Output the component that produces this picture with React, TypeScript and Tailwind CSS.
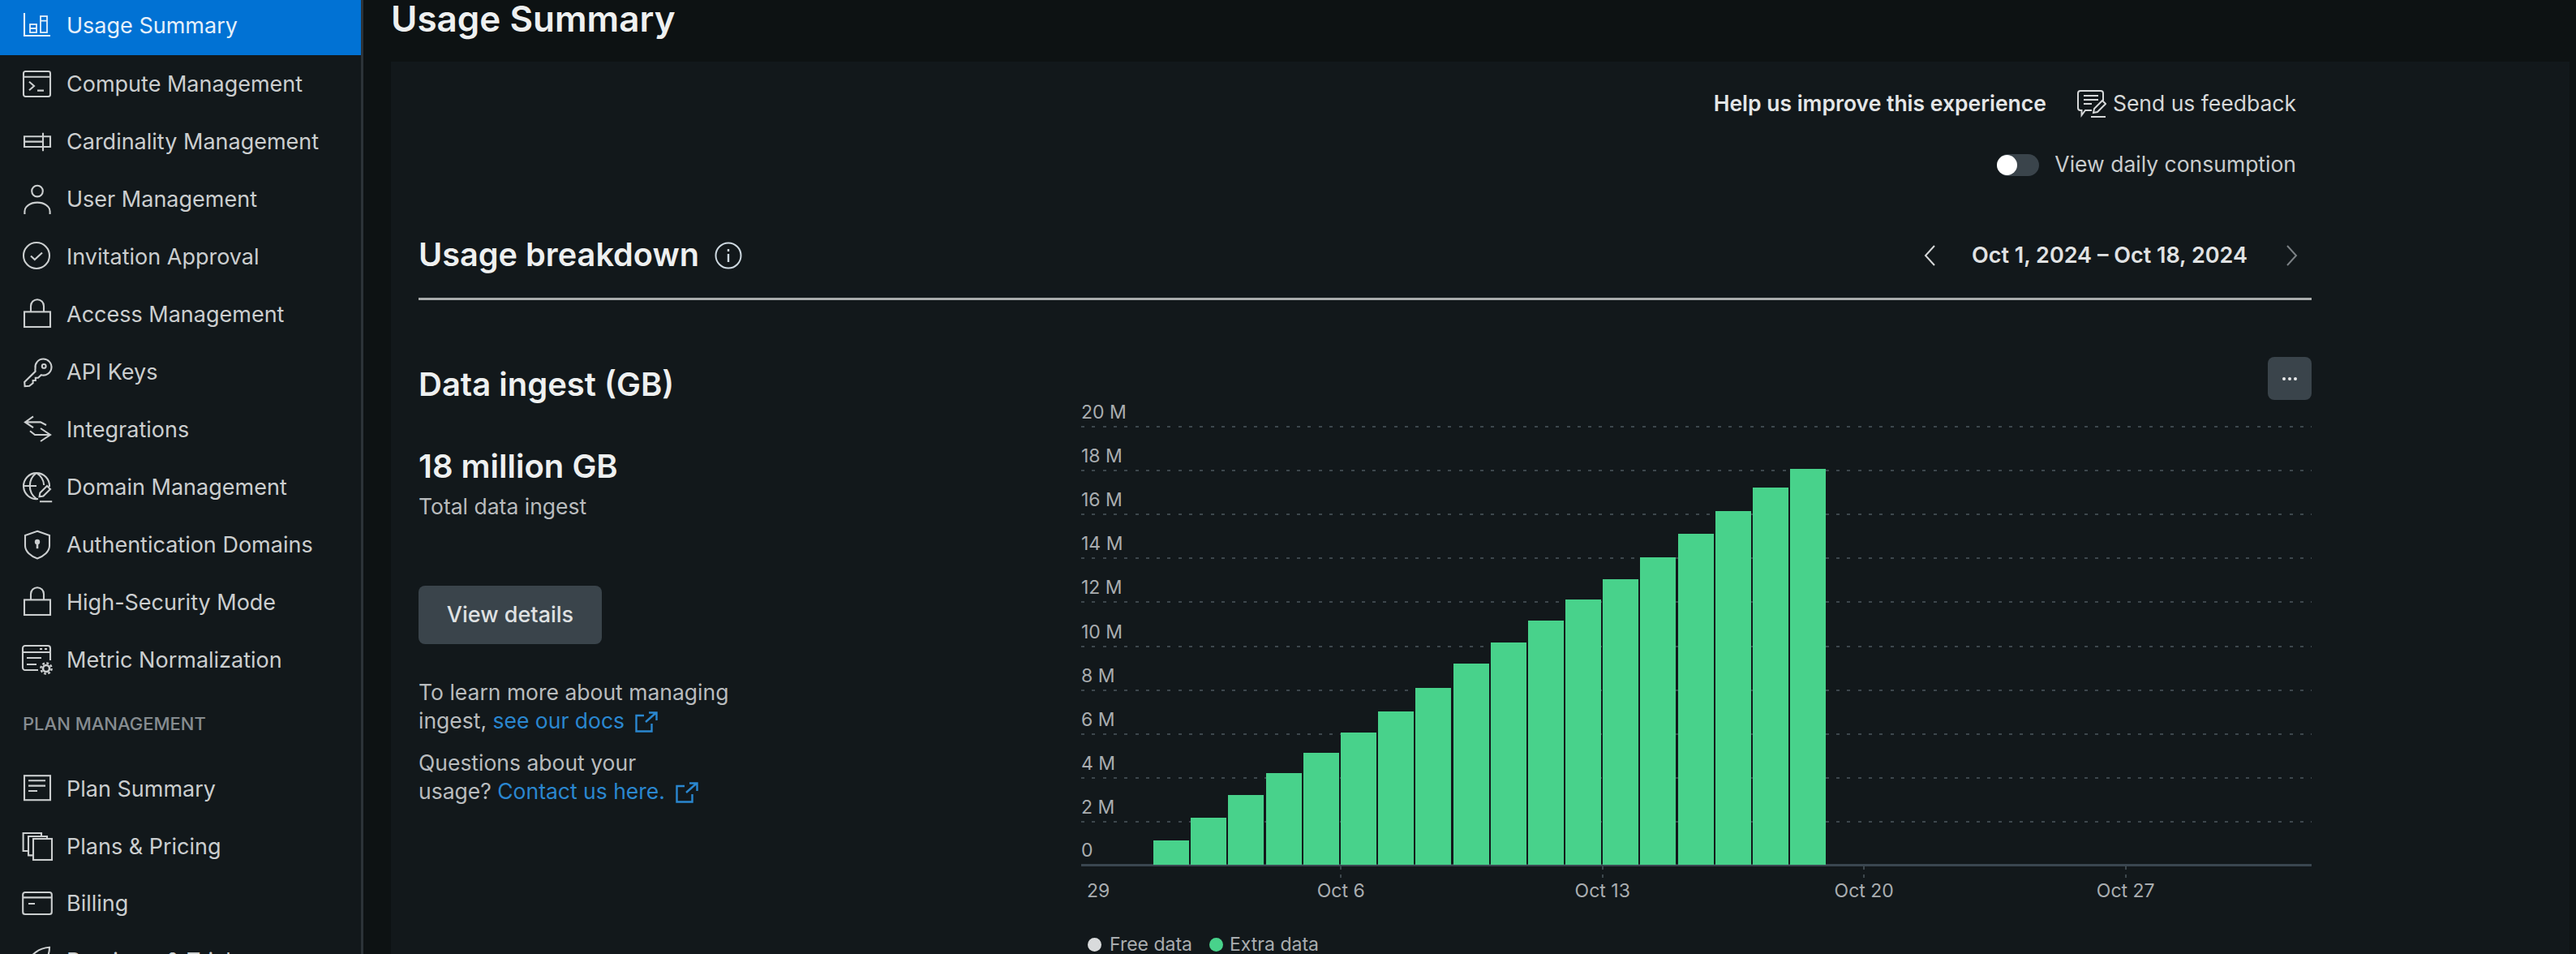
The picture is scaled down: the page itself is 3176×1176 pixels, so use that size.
import { ReactNode } from 'react'

const ic = { fill: 'none', stroke: 'currentColor', strokeWidth: 1.05 }

function Glyph({ children }: { children: ReactNode }) {
  return (
    <svg viewBox="0 0 18 18" className="w-9 h-9 shrink-0 overflow-visible" {...ic}>
      {children}
    </svg>
  )
}

const lock = (
  <Glyph>
    <rect x="1.5" y="7.2" width="16" height="9.3" />
    <path d="M5.5 7.2V3.6a4 4 0 0 1 8 0v3.6" />
  </Glyph>
)

const adminItems: { label: string; icon: ReactNode }[] = [
  {
    label: 'Compute Management',
    icon: (
      <Glyph>
        <rect x="1" y="1" width="16.5" height="15.5" rx="1.2" />
        <path d="M1 4.4h16.5M4.5 7.4l3 2.6-3 2.6M9.5 12.8h4" />
      </Glyph>
    ),
  },
  {
    label: 'Cardinality Management',
    icon: (
      <Glyph>
        <path d="M13 5.6H1.5V12H13M1.5 8.8H13M13 3.4v11.2M13 5.6h4.5V12H13" />
      </Glyph>
    ),
  },
  {
    label: 'User Management',
    icon: (
      <Glyph>
        <circle cx="9.5" cy="3.8" r="3.4" />
        <path d="M1.7 18v-1.6c0-3.2 3.4-5.6 7.8-5.6s7.8 2.4 7.8 5.6V18" />
      </Glyph>
    ),
  },
  {
    label: 'Invitation Approval',
    icon: (
      <Glyph>
        <circle cx="9" cy="8" r="8" />
        <path d="M5.5 8.2l2.4 2.3 4.6-4.3" />
      </Glyph>
    ),
  },
  { label: 'Access Management', icon: lock },
  {
    label: 'API Keys',
    icon: (
      <Glyph>
        <path d="M8.3 6.6a5 5 0 1 1 3.6 4L10 12.4H8.4V14H6.8v1.6L4.6 17.4l-2.8.2-.2-2.6 6.7-6.6a5 5 0 0 1 0-2z" />
        <circle cx="13.6" cy="5.2" r="1.2" />
      </Glyph>
    ),
  },
  {
    label: 'Integrations',
    icon: (
      <Glyph>
        <path d="M7 .7L2 4.2l5 3.4M2 4.2h9.5L15 6M11.5 8l6 4-6 4M17.5 12H8L5 9.6" />
      </Glyph>
    ),
  },
  {
    label: 'Domain Management',
    icon: (
      <Glyph>
        <path d="M10 16a8 8 0 1 1 7-7.5M1 8h8M9 0c-5.5 4-5.5 12 0 16M9 0c3 2 4.5 5 4.6 7.5" />
        <path d="M10.8 14.6l.4-2.4 4.3-4.2 2 2-4.3 4.3zM11 17.6h7.6" />
      </Glyph>
    ),
  },
  {
    label: 'Authentication Domains',
    icon: (
      <Glyph>
        <path d="M9.5.4L17 3v6.4c0 3.5-3.5 6.5-7.5 7.8C5.5 15.9 2 12.9 2 9.4V3z" />
        <circle cx="9.5" cy="7" r="1.6" fill="currentColor" stroke="none" />
        <path d="M9.5 7.5v3.6" strokeWidth="1.3" />
      </Glyph>
    ),
  },
  { label: 'High-Security Mode', icon: lock },
  {
    label: 'Metric Normalization',
    icon: (
      <Glyph>
        <path d="M10 15H2a1.5 1.5 0 0 1-1.5-1.5V1.5A1.5 1.5 0 0 1 2 0h14a1.5 1.5 0 0 1 1.5 1.5V9" />
        <path d="M.5 4h17M3 7.5h9M3 11.5h6M11 2h1.5M14 2h1.5" strokeWidth="0.9" />
        <circle cx="15" cy="14" r="2" strokeWidth="1.3" />
        <circle cx="15" cy="14" r="3.3" strokeWidth="1.2" strokeDasharray="1.4 1.2" />
      </Glyph>
    ),
  },
]

const planItems: { label: string; icon: ReactNode }[] = [
  {
    label: 'Plan Summary',
    icon: (
      <Glyph>
        <rect x="1.5" y="0.6" width="16" height="15" />
        <path d="M4 3.6h10.5M4 6.8h10.5M4 10h5.5" />
      </Glyph>
    ),
  },
  {
    label: 'Plans & Pricing',
    icon: (
      <Glyph>
        <rect x="7" y="4" width="11.5" height="13" />
        <path d="M7 14.2H4V2.5h11.5V4M4 11.5H.8V.5H12v2" />
      </Glyph>
    ),
  },
  {
    label: 'Billing',
    icon: (
      <Glyph>
        <rect x="0.6" y="2" width="17.8" height="13.5" rx="1.4" />
        <path d="M.6 5.2h17.8M4 9h4" />
      </Glyph>
    ),
  },
  {
    label: 'Previews & Trials',
    icon: (
      <Glyph>
        <path d="M2 9l6.5-5.6C11 1.5 14 .6 17 .4c0 3-.8 6-3 8.4L8.6 15z" />
      </Glyph>
    ),
  },
]

function NavRow({ label, icon, height = 'h-[71px]' }: { label: string; icon: ReactNode; height?: string }) {
  return (
    <div className={`${height} shrink-0 flex items-center pl-[27px] gap-[19px] text-[#cbcecf]`}>
      {icon}
      <span>{label}</span>
    </div>
  )
}

function Sidebar() {
  return (
    <aside className="w-[448px] shrink-0 h-full overflow-hidden bg-[#12181b] border-r-[3px] border-[#2c3338] text-[27px] leading-[36px]">
      <div className="h-[68px] flex items-center pb-1 pl-[27px] gap-[19px] bg-[#0172d4] text-[#e6f0fa]">
        <Glyph>
          <path d="M1.5 1v14h16" />
          <rect x="5" y="8" width="4" height="5" strokeWidth="0.9" />
          <rect x="11.5" y="3" width="4" height="10" strokeWidth="0.9" />
          <path d="M11.5 5.8h4M5 10.5h4" strokeWidth="0.9" />
        </Glyph>
        <span>Usage Summary</span>
      </div>
      {adminItems.map((item) => (
        <NavRow key={item.label} {...item} />
      ))}
      <div className="h-[89px] flex items-center pb-[4px] pl-[28px] text-[22px] font-medium text-[#868c90]">
        PLAN MANAGEMENT
      </div>
      {planItems.map((item) => (
        <NavRow key={item.label} height="h-[70.5px]" {...item} />
      ))}
    </aside>
  )
}

function ExternalLink() {
  return (
    <svg viewBox="0 0 28 26" className="inline-block w-[28px] h-[26px] ml-[13px] align-[-5px]" fill="none" stroke="currentColor" strokeWidth="2.4">
      <path d="M11 5H1.5v19.5h19V15M13 13L26 1.5M17 1.5h9.5V11" />
    </svg>
  )
}

// y position of each bar's top edge, left to right
const barTops = [1036, 1008, 980, 953, 928, 903, 877, 848, 818, 792, 765, 739, 714, 687, 658, 630, 601, 578]
const axisY = 1066

const yLabels = ['20 M', '18 M', '16 M', '14 M', '12 M', '10 M', '8 M', '6 M', '4 M', '2 M', '0']

function Chart() {
  return (
    <div className="relative flex-1 min-w-0 pt-[33px]">
      <button className="absolute right-0 top-0 w-[54px] h-[53px] rounded-lg bg-[#3a444b] flex items-center justify-center gap-[3px]">
        <span className="w-[4px] h-[4px] rounded-full bg-[#e8eaeb]" />
        <span className="w-[4px] h-[4px] rounded-full bg-[#e8eaeb]" />
        <span className="w-[4px] h-[4px] rounded-full bg-[#e8eaeb]" />
      </button>

      <div className="relative text-[23px] leading-[30px] text-[#a9adb0]">
        {yLabels.map((label) => (
          <div key={label} className="h-[54.1px] flex flex-col justify-end">
            <div className="pb-[2px]">{label}</div>
            {label === '0' ? (
              <div className="h-[3px] bg-[#3a4650]" />
            ) : (
              <div className="h-[2px] bg-[repeating-linear-gradient(90deg,#3d474d_0_4px,transparent_4px_13.3px)]" />
            )}
          </div>
        ))}

        <div className="absolute left-[89px] bottom-[2px] flex items-end gap-[2.2px]">
          {barTops.map((top) => (
            <div key={top} className="w-[44px] bg-[#48d28b]" style={{ height: axisY - top }} />
          ))}
        </div>
      </div>

      <div className="flex text-[23px] leading-[30px] text-[#a9adb0]">
        <div className="w-[159px] pl-[7px] pt-[15px]">29</div>
        {['Oct 6', 'Oct 13', 'Oct 20', 'Oct 27'].map((label) => (
          <div key={label} className="w-[322.5px] flex flex-col items-center">
            <div className="w-[2px] h-[15px] bg-[linear-gradient(#3d474d_0_4px,transparent_4px_10px,#3d474d_10px_14px,transparent_14px)]" />
            <div>{label}</div>
          </div>
        ))}
      </div>

      <div className="flex items-center mt-[38px] pl-[8px] h-[26px] text-[23px] leading-[26px] text-[#a9adb0]">
        <span className="w-[17px] h-[17px] rounded-full bg-[#d9dbdc]" />
        <span className="ml-[10px] w-[123px]">Free data</span>
        <span className="w-[17px] h-[17px] rounded-full bg-[#48d28b]" />
        <span className="ml-[8px]">Extra data</span>
      </div>
    </div>
  )
}

export default function App() {
  return (
    <div className="flex w-[3176px] h-[1176px] overflow-hidden bg-[#0d1213] font-['Inter',sans-serif]">
      <Sidebar />

      <main className="flex-1 min-w-0 flex flex-col pl-[34px] pr-[8px]">
        <h1 className="h-[76px] pb-[30px] flex items-center text-[44px] leading-[44px] font-semibold text-[#eef0f0] shrink-0">Usage Summary</h1>

        <div className="flex-1 min-h-0 bg-[#12181b] pl-[34px] pr-[318px] overflow-hidden">
          {/* Feedback and toggle */}
          <div className="pt-[32px] pr-[19px] flex flex-col items-end">
            <div className="h-10 flex items-center text-[26.5px]">
              <span className="font-semibold text-[#e4e6e7]">Help us improve this experience</span>
              <svg viewBox="0 0 36 34" className="w-9 h-[34px] ml-[38px] text-[#d6d8d9]" fill="none" stroke="currentColor" strokeWidth="2">
                <path d="M18 25H10l-4.5 6v-6H4a3 3 0 0 1-3-3V4a3 3 0 0 1 3-3h25a3 3 0 0 1 3 3v9" />
                <path d="M8 7h18M8 12h18M8 17h10M20 28l1-5 10-10 4 4-10 10zM17 33h18" />
              </svg>
              <span className="ml-2 text-[#d6d8d9]">Send us feedback</span>
            </div>
            <div className="h-10 mt-[35px] flex items-center text-[26.5px] text-[#c9cccd]">
              <span className="relative w-[52px] h-[27px] rounded-full bg-[#3a444b]">
                <span className="absolute left-0 top-[1px] w-[25px] h-[25px] rounded-full bg-white" />
              </span>
              <span className="ml-[19px]">View daily consumption</span>
            </div>
          </div>

          {/* Heading and date range */}
          <div className="mt-[62px] pb-[22px] border-b-[3px] border-[#a8abac] flex items-center justify-between">
            <div className="h-[60px] flex items-center">
              <h2 className="text-[39.7px] font-semibold text-[#eef0f0]">Usage breakdown</h2>
              <svg viewBox="0 0 34 34" className="w-[34px] h-[34px] ml-[19px] text-[#cdd8e0]" fill="none" stroke="currentColor" strokeWidth="2">
                <circle cx="17" cy="17" r="15.5" />
                <path d="M17 15v10M17 9v3" strokeWidth="2.4" />
              </svg>
            </div>
            <div className="flex items-center pr-[16px] text-[27px] font-semibold text-[#e0e2e3]">
              <svg viewBox="0 0 16 28" className="w-4 h-7 text-[#d6d8d9]" fill="none" stroke="currentColor" strokeWidth="2">
                <path d="M14 2L3 14l11 12" />
              </svg>
              <span className="ml-[44px]">Oct 1, 2024 – Oct 18, 2024</span>
              <svg viewBox="0 0 16 28" className="w-4 h-7 ml-[47px] text-[#7b8185]" fill="none" stroke="currentColor" strokeWidth="2">
                <path d="M2 2l11 12L2 26" />
              </svg>
            </div>
          </div>

          <div className="flex mt-[70px]">
            {/* Data ingest summary */}
            <div className="w-[817px] shrink-0 pt-[9px]">
              <h3 className="h-[50px] flex items-center text-[40px] font-semibold text-[#eef0f0]">Data ingest (GB)</h3>
              <div className="h-[50px] mt-[51px] flex items-center text-[40px] font-semibold text-[#eef0f0]">18 million GB</div>
              <div className="h-9 mt-[7px] flex items-center text-[26.5px] text-[#b9bcbe]">Total data ingest</div>
              <button className="block w-[226px] h-[72px] mt-[79px] rounded-lg bg-[#3a444b] text-[27px] font-medium text-[#dfe1e2]">
                View details
              </button>
              <p className="mt-[42px] text-[26.5px] leading-[35px] text-[#b9bcbe]">
                To learn more about managing
                <br />
                ingest, <span className="text-[#2a87d0]">see our docs<ExternalLink /></span>
              </p>
              <p className="mt-[17px] text-[26.5px] leading-[35px] text-[#b9bcbe]">
                Questions about your
                <br />
                usage? <span className="text-[#2a87d0]">Contact us here.<ExternalLink /></span>
              </p>
            </div>

            <Chart />
          </div>
        </div>
      </main>
    </div>
  )
}
